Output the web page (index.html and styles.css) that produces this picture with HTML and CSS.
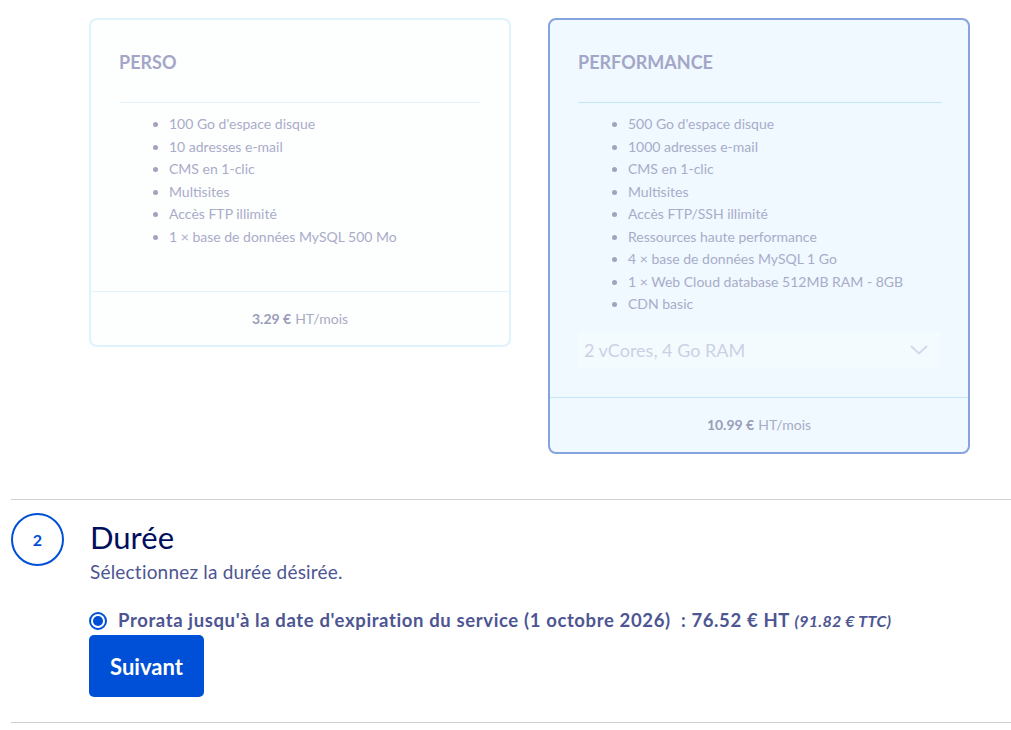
FILE: index.html
```html
<!DOCTYPE html>
<html lang="fr">
<head>
<meta charset="utf-8">
<title>Durée</title>
<link rel="stylesheet" href="styles.css">
</head>
<body>
<div class="offers">
  <div class="card">
    <div class="card-body">
      <h3 class="card-title">PERSO</h3>
      <div class="card-sep"></div>
      <ul class="features">
        <li>100 Go d'espace disque</li>
        <li>10 adresses e-mail</li>
        <li>CMS en 1-clic</li>
        <li>Multisites</li>
        <li>Accès FTP illimité</li>
        <li>1 × base de données MySQL 500 Mo</li>
      </ul>
    </div>
    <div class="card-footer"><strong>3.29 €</strong> HT/mois</div>
  </div>
  <div class="card card-selected">
    <div class="card-body">
      <h3 class="card-title">PERFORMANCE</h3>
      <div class="card-sep"></div>
      <ul class="features">
        <li>500 Go d'espace disque</li>
        <li>1000 adresses e-mail</li>
        <li>CMS en 1-clic</li>
        <li>Multisites</li>
        <li>Accès FTP/SSH illimité</li>
        <li>Ressources haute performance</li>
        <li>4 × base de données MySQL 1 Go</li>
        <li>1 × Web Cloud database 512MB RAM - 8GB</li>
        <li>CDN basic</li>
      </ul>
      <div class="select">
        <span>2 vCores, 4 Go RAM</span>
        <svg class="chevron" width="18" height="10" viewBox="0 0 18 10"><path d="M1 1 L9 8.5 L17 1" fill="none" stroke="#d3d8ec" stroke-width="2"/></svg>
      </div>
    </div>
    <div class="card-footer"><strong>10.99 €</strong> HT/mois</div>
  </div>
</div>

<section class="step">
  <div class="step-head">
    <div class="step-num">2</div>
    <div class="step-text">
      <h2 class="step-title">Durée</h2>
      <p class="step-desc">Sélectionnez la durée désirée.</p>
    </div>
  </div>
  <div class="step-content">
    <label class="radio-row">
      <span class="radio"><span class="radio-dot"></span></span>
      <span class="radio-label">Prorata jusqu'à la date d'expiration du service (1 octobre 2026)&nbsp; : 76.52 € HT <em>(91.82 € TTC)</em></span>
    </label>
    <button class="btn-next">Suivant</button>
  </div>
</section>
</body>
</html>
```

FILE: styles.css
```css
html, body {
  margin: 0;
  padding: 0;
  background: #ffffff;
}
body {
  font-family: "Lato", "Source Sans Pro", "Noto Sans", sans-serif;
  color: #4d5592;
}
.offers {
  display: flex;
  align-items: flex-start;
  gap: 37px;
  padding: 18px 0 0 89px;
  height: 499px;
  box-sizing: border-box;
}
.card {
  width: 422px;
  box-sizing: border-box;
  border: 2px solid #def3fb;
  border-radius: 8px;
  background: #fdfefe;
}
.card-selected {
  border-color: #85a4df;
  background: #eff9ff;
}
.card-body {
  padding: 30px 28px 27px 28px;
}
.card-selected .card-body {
  padding-bottom: 28px;
}
.card-title {
  margin: 0;
  font-size: 18px;
  line-height: 24px;
  font-weight: 700;
  color: #a4a6c8;
}
.card-sep {
  height: 1px;
  background: #e6f5fc;
  margin: 28px 0 10px 0;
  width: 362px;
}
.card-selected .card-sep {
  background: #c5e5f6;
  width: 364px;
}
.features {
  margin: 0 0 16px 0;
  padding: 0 0 0 50px;
  font-size: 14px;
  line-height: 22.5px;
  color: #a9acc9;
}
.features li::marker {
  color: #a0a4c0;
}
.select {
  display: flex;
  align-items: center;
  justify-content: space-between;
  height: 37px;
  background: #f4fbff;
  padding: 0 12px 0 6px;
  margin-top: 15px;
  font-size: 18px;
  color: #cbd1e4;
}
.chevron {
  display: block;
}
.card-footer {
  border-top: 1px solid #e3f4fc;
  height: 53px;
  display: flex;
  align-items: center;
  justify-content: center;
  font-size: 14px;
  color: #a9abc5;
}
.card-selected .card-footer {
  border-top-color: #c6e5f5;
  height: 54px;
}
.card-footer strong {
  color: #9a9cb8;
  margin-right: 4px;
}
.step {
  margin-left: 11px;
  border-top: 1px solid #cfcfd3;
  border-bottom: 1px solid #cfcfd3;
  padding: 12px 0 0 0;
  height: 224px;
  box-sizing: border-box;
}
.step-head {
  display: flex;
  gap: 26px;
}
.step-num {
  flex: none;
  width: 53px;
  height: 53px;
  box-sizing: border-box;
  border: 2px solid #0050d7;
  border-radius: 50%;
  display: flex;
  align-items: center;
  justify-content: center;
  font-size: 16px;
  font-weight: 700;
  color: #0050d7;
  margin-top: 1px;
}
.step-title {
  margin: 6px 0 0 0;
  font-size: 31px;
  line-height: 38px;
  font-weight: 400;
  color: #000e5c;
}
.step-desc {
  margin: 3px 0 0 0;
  font-size: 19px;
  line-height: 26px;
  letter-spacing: 0.2px;
  color: #4d5592;
}
.step-content {
  padding-left: 78px;
  margin-top: 22px;
}
.radio-row {
  display: flex;
  align-items: center;
  gap: 11px;
  font-size: 18.5px;
  line-height: 26px;
  letter-spacing: 0.62px;
  font-weight: 700;
  color: #4d5592;
}
.radio {
  flex: none;
  width: 18px;
  height: 18px;
  box-sizing: border-box;
  border: 2px solid #0050d7;
  border-radius: 50%;
  display: flex;
  align-items: center;
  justify-content: center;
}
.radio-dot {
  width: 10px;
  height: 10px;
  border-radius: 50%;
  background: #0050d7;
}
.radio-label em {
  font-size: 16px;
  letter-spacing: 0.3px;
  font-style: italic;
}
.btn-next {
  display: block;
  margin-top: 1px;
  width: 115px;
  height: 62px;
  border: none;
  border-radius: 5px;
  background: #0050d7;
  color: #ffffff;
  font-family: inherit;
  font-size: 22px;
  font-weight: 700;
}
```
